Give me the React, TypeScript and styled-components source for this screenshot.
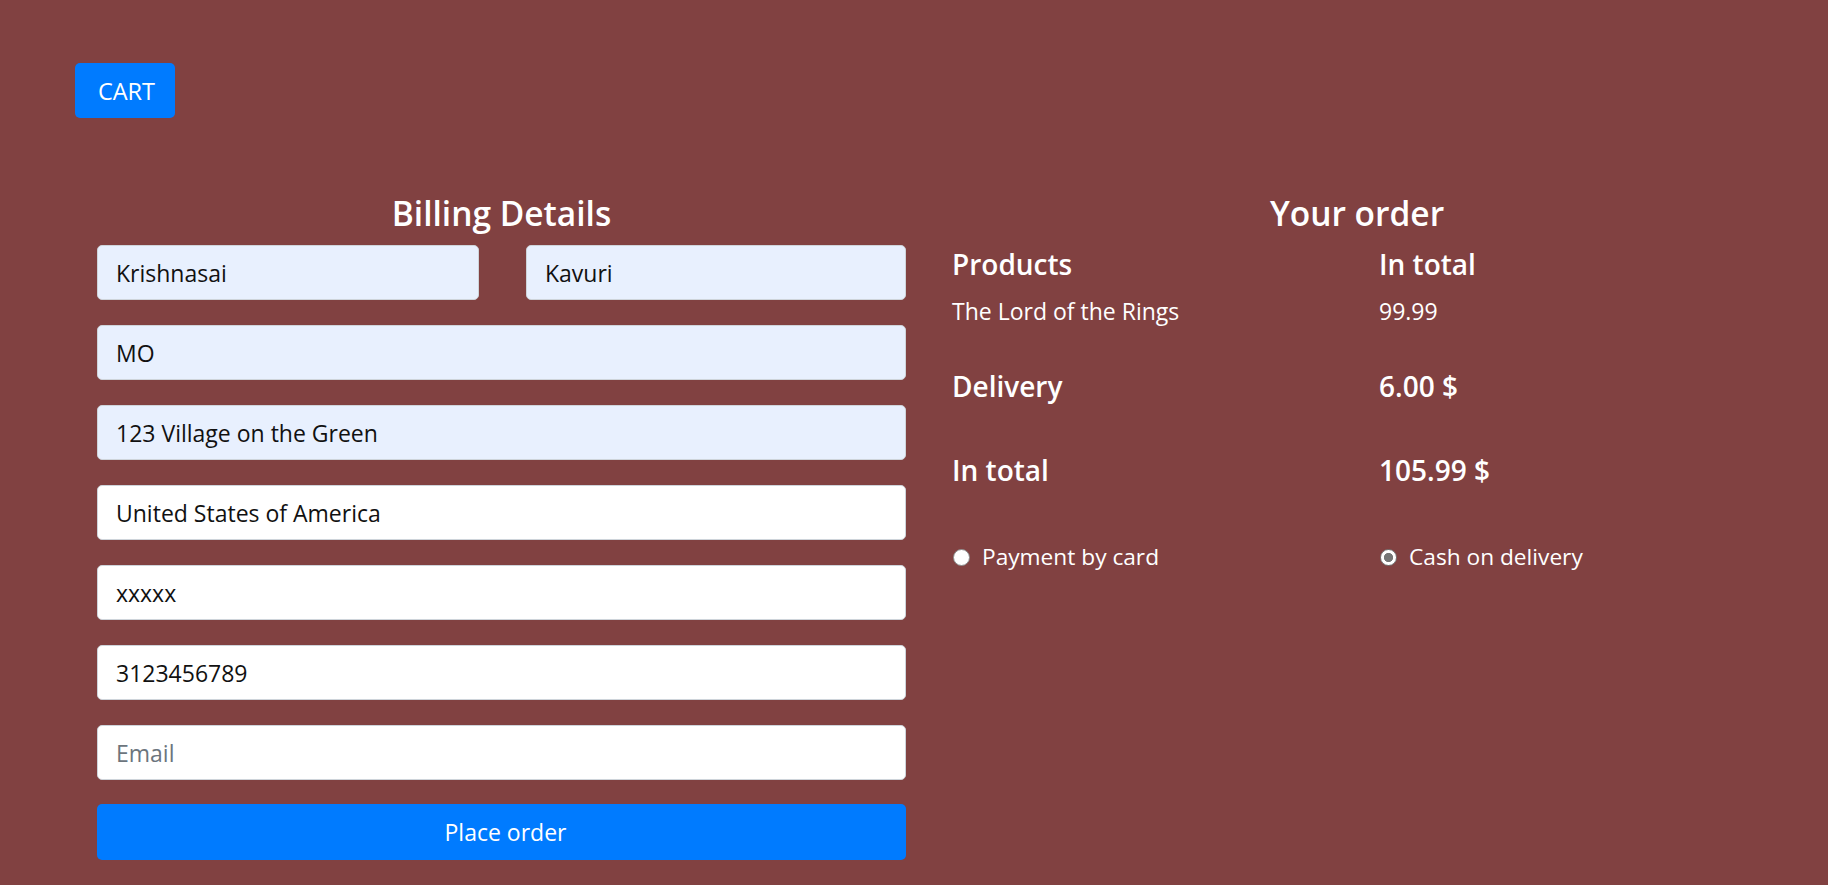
import React from "react";
import styled, { createGlobalStyle } from "styled-components";

const GlobalStyle = createGlobalStyle`
  html, body {
    margin: 0;
    padding: 0;
    background: #814141;
  }
  body {
    font-family: "Open Sans", "Noto Sans", sans-serif;
    color: #ffffff;
  }
  * { box-sizing: border-box; }
`;

const Page = styled.div`
  min-height: 885px;
  background: #814141;
`;

const TopBar = styled.div`
  padding: 63px 0 0 75px;
  display: flex;
`;

const CartButton = styled.button`
  width: 100px;
  height: 55px;
  border: none;
  border-radius: 5px;
  background: #007bff;
  color: #ffffff;
  font-family: inherit;
  font-size: 23.5px;
  display: flex;
  align-items: center;
  justify-content: center;
  padding: 0 0 0 3px;
`;

const Main = styled.div`
  display: grid;
  grid-template-columns: 809px 810px;
  column-gap: 46px;
  padding-left: 97px;
  margin-top: 75px;
`;

const Column = styled.section`
  display: flex;
  flex-direction: column;
`;

const Title = styled.h3`
  margin: 0 0 11px;
  font-size: 33.5px;
  line-height: 41px;
  font-weight: 600;
  text-align: center;
  color: #ffffff;
`;

const Form = styled.form`
  display: flex;
  flex-direction: column;
  gap: 25px;
`;

const NameRow = styled.div`
  display: grid;
  grid-template-columns: 382px 380px;
  column-gap: 47px;
`;

const Field = styled.input<{ $filled?: boolean }>`
  width: 100%;
  height: 55px;
  padding: 0 18px;
  border: 1px solid #ced4da;
  border-radius: 5px;
  background: ${(p) => (p.$filled ? "#e8f0fe" : "#ffffff")};
  color: #111111;
  font-family: inherit;
  font-size: 23px;
  outline: none;
  &::placeholder {
    color: #6c757d;
  }
`;

const SubmitButton = styled.button`
  height: 56px;
  margin-top: -1px;
  padding: 0 0 0 8px;
  border: none;
  border-radius: 5px;
  background: #007bff;
  color: #ffffff;
  font-family: inherit;
  font-size: 23px;
`;

const OrderRow = styled.div<{ $top: number }>`
  display: grid;
  grid-template-columns: 427px 1fr;
  margin-top: ${(p) => p.$top}px;
`;

const Heading = styled.div`
  font-size: 28px;
  line-height: 34px;
  font-weight: 600;
  color: #ffffff;
`;

const Cell = styled.div`
  font-size: 23px;
  line-height: 32px;
  color: #ffffff;
`;

const RadioLabel = styled.label`
  display: flex;
  align-items: center;
  gap: 12px;
  font-size: 22.7px;
  line-height: 32px;
  color: #ffffff;
  cursor: pointer;
`;

const Radio = styled.input.attrs({ type: "radio" })`
  appearance: none;
  -webkit-appearance: none;
  margin: 0 0 0 1px;
  width: 17px;
  height: 17px;
  border-radius: 50%;
  border: 1px solid #8a8a8a;
  background: #ffffff;
  flex: none;
  &:checked {
    background: radial-gradient(circle, #767676 0 4.3px, #ffffff 4.9px);
    border-color: #767676;
  }
`;

export default function App() {
  return (
    <Page>
      <GlobalStyle />
      <TopBar>
        <CartButton>CART</CartButton>
      </TopBar>
      <Main>
        <Column>
          <Title>Billing Details</Title>
          <Form onSubmit={(e) => e.preventDefault()}>
            <NameRow>
              <Field $filled defaultValue="Krishnasai" />
              <Field $filled defaultValue="Kavuri" />
            </NameRow>
            <Field $filled defaultValue="MO" />
            <Field $filled defaultValue="123 Village on the Green" />
            <Field defaultValue="United States of America" />
            <Field defaultValue="xxxxx" />
            <Field defaultValue="3123456789" />
            <Field placeholder="Email" />
            <SubmitButton type="submit">Place order</SubmitButton>
          </Form>
        </Column>
        <Column>
          <Title>Your order</Title>
          <OrderRow $top={2}>
            <Heading>Products</Heading>
            <Heading>In total</Heading>
          </OrderRow>
          <OrderRow $top={14}>
            <Cell>The Lord of the Rings</Cell>
            <Cell>99.99</Cell>
          </OrderRow>
          <OrderRow $top={42}>
            <Heading>Delivery</Heading>
            <Heading>6.00 $</Heading>
          </OrderRow>
          <OrderRow $top={50}>
            <Heading>In total</Heading>
            <Heading>105.99 $</Heading>
          </OrderRow>
          <OrderRow $top={54}>
            <RadioLabel>
              <Radio name="payment" />
              Payment by card
            </RadioLabel>
            <RadioLabel>
              <Radio name="payment" defaultChecked />
              Cash on delivery
            </RadioLabel>
          </OrderRow>
        </Column>
      </Main>
    </Page>
  );
}
